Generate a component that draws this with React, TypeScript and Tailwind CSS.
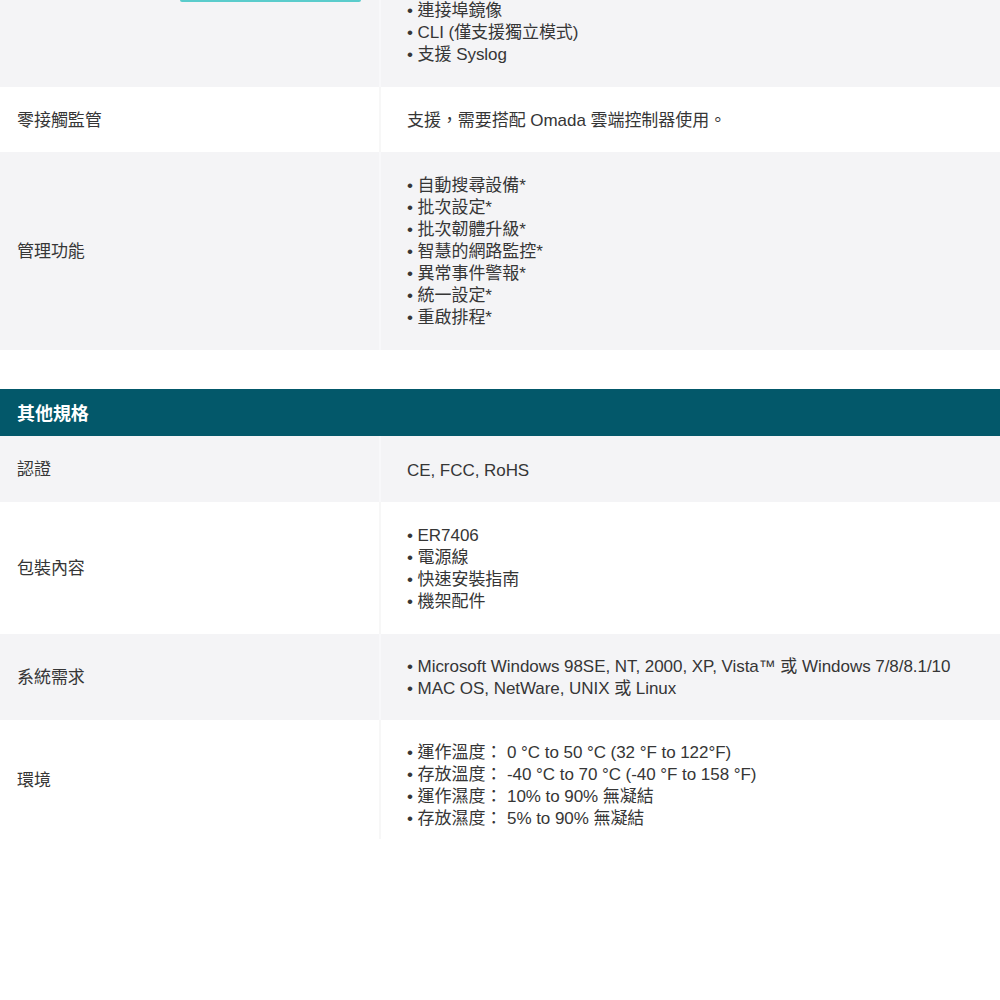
const FONT = {
  fontFamily: '"Liberation Sans", Arial, "Noto Sans CJK TC", sans-serif',
};

type Row = { label: string; lines: string[]; gray: boolean; pad: string };

const managementRows: Row[] = [
  {
    label: "零接觸監管",
    lines: ["支援，需要搭配 Omada 雲端控制器使用。"],
    gray: false,
    pad: "pt-[22.5px] pb-[20.5px]",
  },
  {
    label: "管理功能",
    lines: [
      "• 自動搜尋設備*",
      "• 批次設定*",
      "• 批次韌體升級*",
      "• 智慧的網路監控*",
      "• 異常事件警報*",
      "• 統一設定*",
      "• 重啟排程*",
    ],
    gray: true,
    pad: "pt-[23px] pb-[21px]",
  },
];

const otherRows: Row[] = [
  {
    label: "認證",
    lines: ["CE, FCC, RoHS"],
    gray: true,
    pad: "pt-[23.5px] pb-[20.5px]",
  },
  {
    label: "包裝內容",
    lines: ["• ER7406", "• 電源線", "• 快速安裝指南", "• 機架配件"],
    gray: false,
    pad: "pt-[23px] pb-[21px]",
  },
  {
    label: "系統需求",
    lines: [
      "• Microsoft Windows 98SE, NT, 2000, XP, Vista™ 或 Windows 7/8/8.1/10",
      "• MAC OS, NetWare, UNIX 或 Linux",
    ],
    gray: true,
    pad: "pt-[22px] pb-[20px]",
  },
];

function SpecRow({ row }: { row: Row }) {
  return (
    <div className={`flex ${row.gray ? "bg-[#f4f4f6]" : "bg-white"}`}>
      <div className="w-[379px] shrink-0 flex items-center pl-[17px] pt-[2px]">
        {row.label}
      </div>
      <div
        className={`flex-1 border-l-2 pl-[26px] ${row.pad} ${
          row.gray ? "border-[#f8f8fa]" : "border-[#f7f7f7]"
        }`}
      >
        {row.lines.map((l) => (
          <div key={l}>{l}</div>
        ))}
      </div>
    </div>
  );
}

export default function App() {
  return (
    <div
      className="w-[1000px] min-h-[1000px] bg-white text-[#363636] text-[17px] leading-[22px] tracking-[-0.05px]"
      style={FONT}
    >
      {/* tail of the previous spec row */}
      <div className="flex bg-[#f4f4f6] h-[87px] overflow-hidden">
        <div className="w-[379px] shrink-0 pl-[180px]">
          <div className="w-[181px] h-[2px] rounded-b bg-[#5acccc]" />
        </div>
        <div className="flex-1 border-l-2 border-[#f8f8fa] pl-[26px]">
          <div>• 連接埠鏡像</div>
          <div>• CLI (僅支援獨立模式)</div>
          <div>• 支援 Syslog</div>
        </div>
      </div>

      {managementRows.map((r) => (
        <SpecRow key={r.label} row={r} />
      ))}

      <div className="h-[39px]" />

      <div className="h-[47px] bg-[#03586a] flex items-center pl-[17px] pt-[2px] text-white font-bold text-[18px]">
        其他規格
      </div>

      {otherRows.map((r) => (
        <SpecRow key={r.label} row={r} />
      ))}

      <div className="flex bg-white">
        <div className="w-[379px] shrink-0 flex items-center pl-[17px] pt-[2px]">
          環境
        </div>
        <div className="flex-1 border-l-2 border-[#f7f7f7] pt-[22px] pb-[9px] pl-[26px]">
          <div>• 運作溫度： 0 °C to 50 °C (32 °F to 122°F)</div>
          <div>• 存放溫度： -40 °C to 70 °C (-40 °F to 158 °F)</div>
          <div>• 運作濕度： 10% to 90% 無凝結</div>
          <div>• 存放濕度： 5% to 90% 無凝結</div>
        </div>
      </div>
    </div>
  );
}
